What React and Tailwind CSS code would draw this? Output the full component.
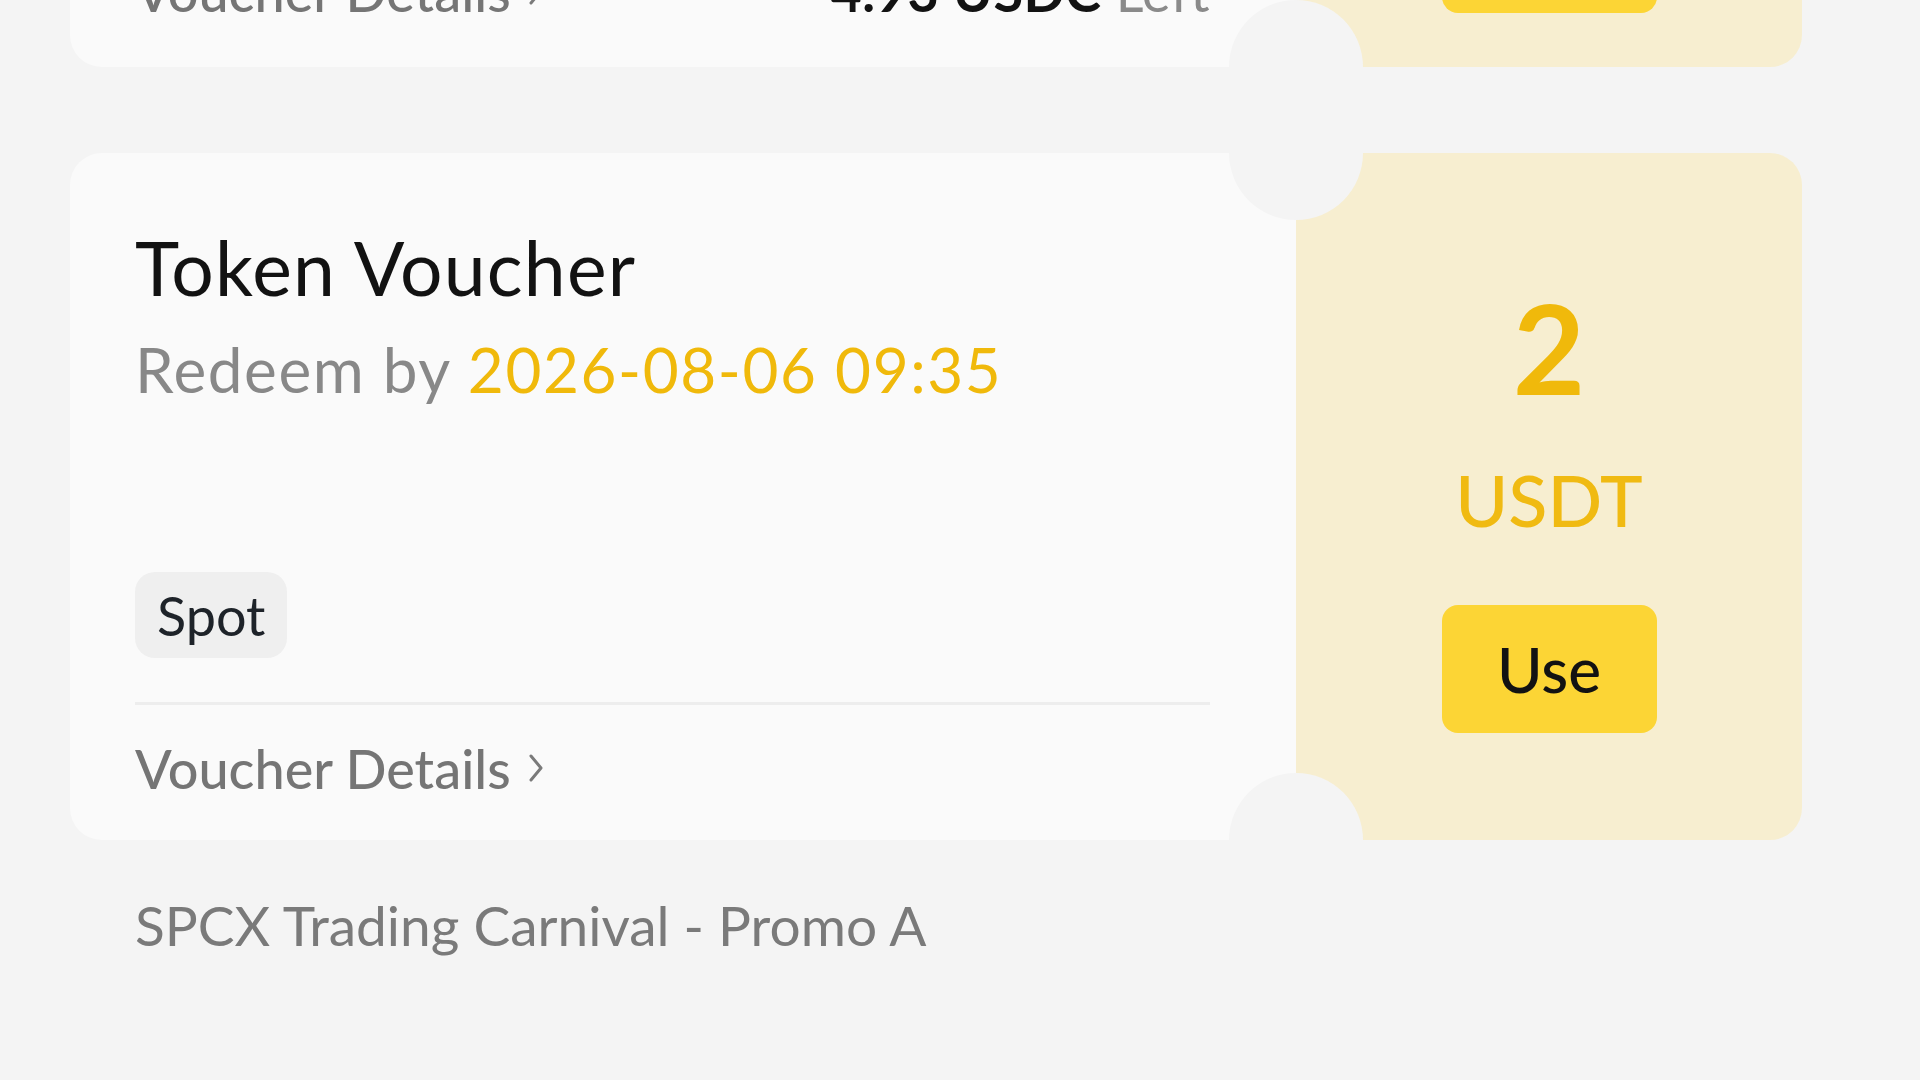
import React from "react";

function Chevron() {
  return (
    <svg width="18" height="32" viewBox="0 0 18 32" className="ml-[16px] mb-[2px]">
      <path d="M4 4 L14 16 L4 28" fill="none" stroke="#7a7a7a" strokeWidth="3" strokeLinecap="round" strokeLinejoin="round" />
    </svg>
  );
}

function Notch({ pos }) {
  return (
    <div
      className={
        pos === "top"
          ? "absolute left-[1159px] -top-[67px] w-[134px] h-[134px] rounded-full bg-[#F4F4F4]"
          : "absolute left-[1159px] -bottom-[67px] w-[134px] h-[134px] rounded-full bg-[#F4F4F4]"
      }
    />
  );
}

export default function App() {
  return (
    <div className="w-[1920px] h-[1080px] overflow-hidden bg-[#F4F4F4] font-['Lato',sans-serif] pl-[70px] pr-[118px]">
      {/* Card 1 (partially visible) */}
      <div className="relative flex h-[300px] -mt-[233px] overflow-hidden">
        <div className="flex-1 flex flex-col justify-end bg-[#FAFAFA] rounded-l-[32px] pl-[65px] pr-[86px] pb-[48px]">
          <div className="flex items-end justify-between">
            <div className="flex items-center text-[54px] leading-none font-medium text-[#757575]">
              Voucher Details
              <Chevron />
            </div>
            <div className="text-[54px] leading-none tracking-[0.5px]">
              <span className="font-bold text-[#121212]">4.93 USDC</span>
              <span className="text-[#8a8a8a]"> Left</span>
            </div>
          </div>
        </div>
        <div className="w-[506px] flex flex-col items-center justify-end bg-[#F7EED0] rounded-r-[32px] pb-[54px]">
          <div className="w-[215px] h-[128px] rounded-[16px] bg-[#FCD535]" />
        </div>
        <Notch pos="bottom" />
      </div>

      {/* Card 2 */}
      <div className="relative flex h-[687px] mt-[86px] overflow-hidden">
        <div className="flex-1 flex flex-col bg-[#FAFAFA] rounded-l-[32px] pt-[78px] pl-[65px] pr-[86px]">
          <div className="text-[75px] leading-[72px] h-[72px] tracking-[1.2px] text-[#121212] font-normal">Token Voucher</div>
          <div className="mt-[36px] text-[62px] leading-[60px] h-[60px] tracking-[1.6px] text-[#888888]">
            Redeem by <span className="text-[#F0B90B]">2026-08-06 09:35</span>
          </div>
          <div className="mt-[173px] self-start h-[86px] px-[22px] flex items-center rounded-[20px] bg-[#EFEFEF] text-[54px] text-[#1E2329]">
            Spot
          </div>
          <div className="mt-[44px] h-[3px] bg-[#EDEDED]" />
          <div className="mt-[36px] flex items-center text-[54px] leading-none h-[56px] font-medium text-[#757575]">
            Voucher Details
            <Chevron />
          </div>
        </div>
        <div className="w-[506px] flex flex-col items-center bg-[#F7EED0] rounded-r-[32px] pt-[132px]">
          <div className="text-[125px] leading-none h-[125px] font-bold text-[#F0B90B]">2</div>
          <div className="mt-[53px] text-[72px] leading-none h-[72px] font-medium text-[#F0BA12]">USDT</div>
          <button className="mt-[70px] w-[215px] h-[128px] rounded-[16px] bg-[#FCD535] text-[62px] font-medium text-[#121212] flex items-center justify-center">
            Use
          </button>
        </div>
        <Notch pos="top" />
        <Notch pos="bottom" />
      </div>

      {/* Footer text */}
      <div className="pl-[65px] mt-[58px] text-[55px] leading-none text-[#7A7A7A]">
        SPCX Trading Carnival - Promo A
      </div>
    </div>
  );
}
